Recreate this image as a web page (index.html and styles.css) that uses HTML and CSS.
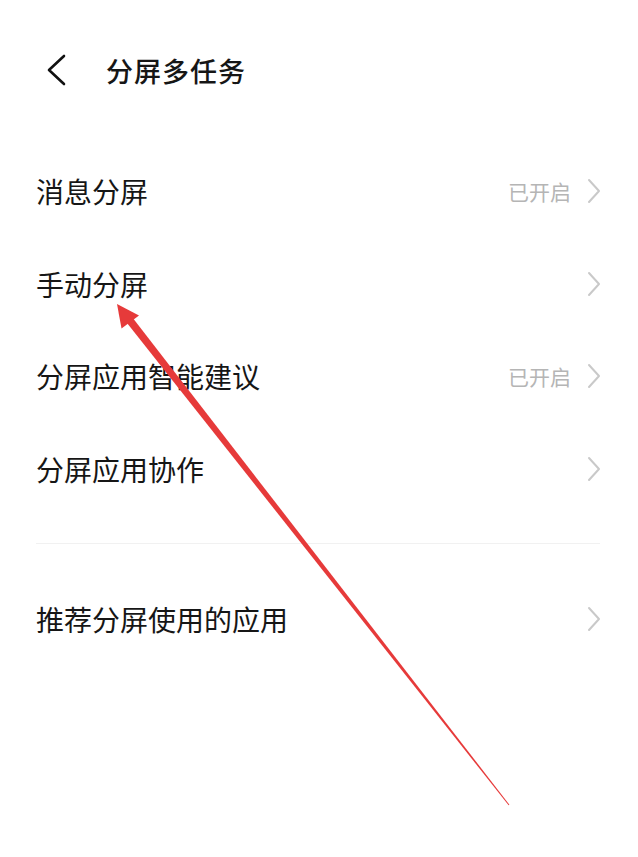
FILE: index.html
```html
<!DOCTYPE html>
<html lang="zh-CN">
<head>
<meta charset="UTF-8">
<title>分屏多任务</title>
<link rel="stylesheet" href="styles.css">
</head>
<body>
<div class="page">
	<div class="header">
		<svg class="back" width="22" height="32" viewBox="0 0 22 32">
			<polyline points="19,2 4,16 19,30" fill="none" stroke="#111" stroke-width="2.6" stroke-linecap="round" stroke-linejoin="round"/>
		</svg>
		<h1 class="title">分屏多任务</h1>
	</div>

	<div class="list">
		<div class="row">
			<span class="label">消息分屏</span>
			<span class="status">已开启</span>
			<svg class="chev" width="14" height="26" viewBox="0 0 14 26"><polyline points="2,2 12,13 2,24" fill="none" stroke="#c9c9c9" stroke-width="2" stroke-linecap="round" stroke-linejoin="round"/></svg>
		</div>
		<div class="row">
			<span class="label">手动分屏</span>
			<svg class="chev" width="14" height="26" viewBox="0 0 14 26"><polyline points="2,2 12,13 2,24" fill="none" stroke="#c9c9c9" stroke-width="2" stroke-linecap="round" stroke-linejoin="round"/></svg>
		</div>
		<div class="row">
			<span class="label">分屏应用智能建议</span>
			<span class="status">已开启</span>
			<svg class="chev" width="14" height="26" viewBox="0 0 14 26"><polyline points="2,2 12,13 2,24" fill="none" stroke="#c9c9c9" stroke-width="2" stroke-linecap="round" stroke-linejoin="round"/></svg>
		</div>
		<div class="row">
			<span class="label">分屏应用协作</span>
			<svg class="chev" width="14" height="26" viewBox="0 0 14 26"><polyline points="2,2 12,13 2,24" fill="none" stroke="#c9c9c9" stroke-width="2" stroke-linecap="round" stroke-linejoin="round"/></svg>
		</div>
	</div>

	<div class="divider"></div>

	<div class="list">
		<div class="row">
			<span class="label">推荐分屏使用的应用</span>
			<svg class="chev" width="14" height="26" viewBox="0 0 14 26"><polyline points="2,2 12,13 2,24" fill="none" stroke="#c9c9c9" stroke-width="2" stroke-linecap="round" stroke-linejoin="round"/></svg>
		</div>
	</div>

	<!-- annotation arrow drawn over the screenshot -->
	<svg class="arrow" width="638" height="857" viewBox="0 0 638 857">
		<polygon points="133.4,318.8 127.2,323.2 508.6,805.3 509.4,804.7" fill="#e63a3a"/>
		<polygon points="117,304 139,315.5 121.5,328.5" fill="#e63a3a"/>
	</svg>
</div>
</body>
</html>
```

FILE: styles.css
```css
html, body {
	margin: 0;
	padding: 0;
	background-color: #fff;
}

body {
	font-family: "Noto Sans CJK SC", "Noto Sans", sans-serif;
	color: #161616;
}

.page {
	position: relative;
	width: 638px;
	height: 857px;
	overflow: hidden;
}

.header {
	display: flex;
	align-items: center;
	height: 100px;
	padding: 40px 0 0 45px;
	box-sizing: border-box;
}

.back {
	display: block;
}

.title {
	margin: 0 0 0 39px;
	font-size: 27px;
	font-weight: 500;
	letter-spacing: 1px;
	line-height: 1;
}

.list {
	padding: 0 37px 0 36px;
}

.header + .list {
	margin-top: 45px;
}

.row {
	display: flex;
	align-items: center;
	height: 92.5px;
}

.label {
	flex: 1;
	font-size: 28px;
	line-height: 1;
}

.status {
	font-size: 21px;
	color: #b5b5b5;
	margin-right: 16px;
	line-height: 1;
}

.chev {
	display: block;
}

.divider {
	height: 1px;
	background-color: #f1f1f1;
	margin: 28px 38px 29px 36px;
}

.arrow {
	position: absolute;
	left: 0;
	top: 0;
	pointer-events: none;
}
```
